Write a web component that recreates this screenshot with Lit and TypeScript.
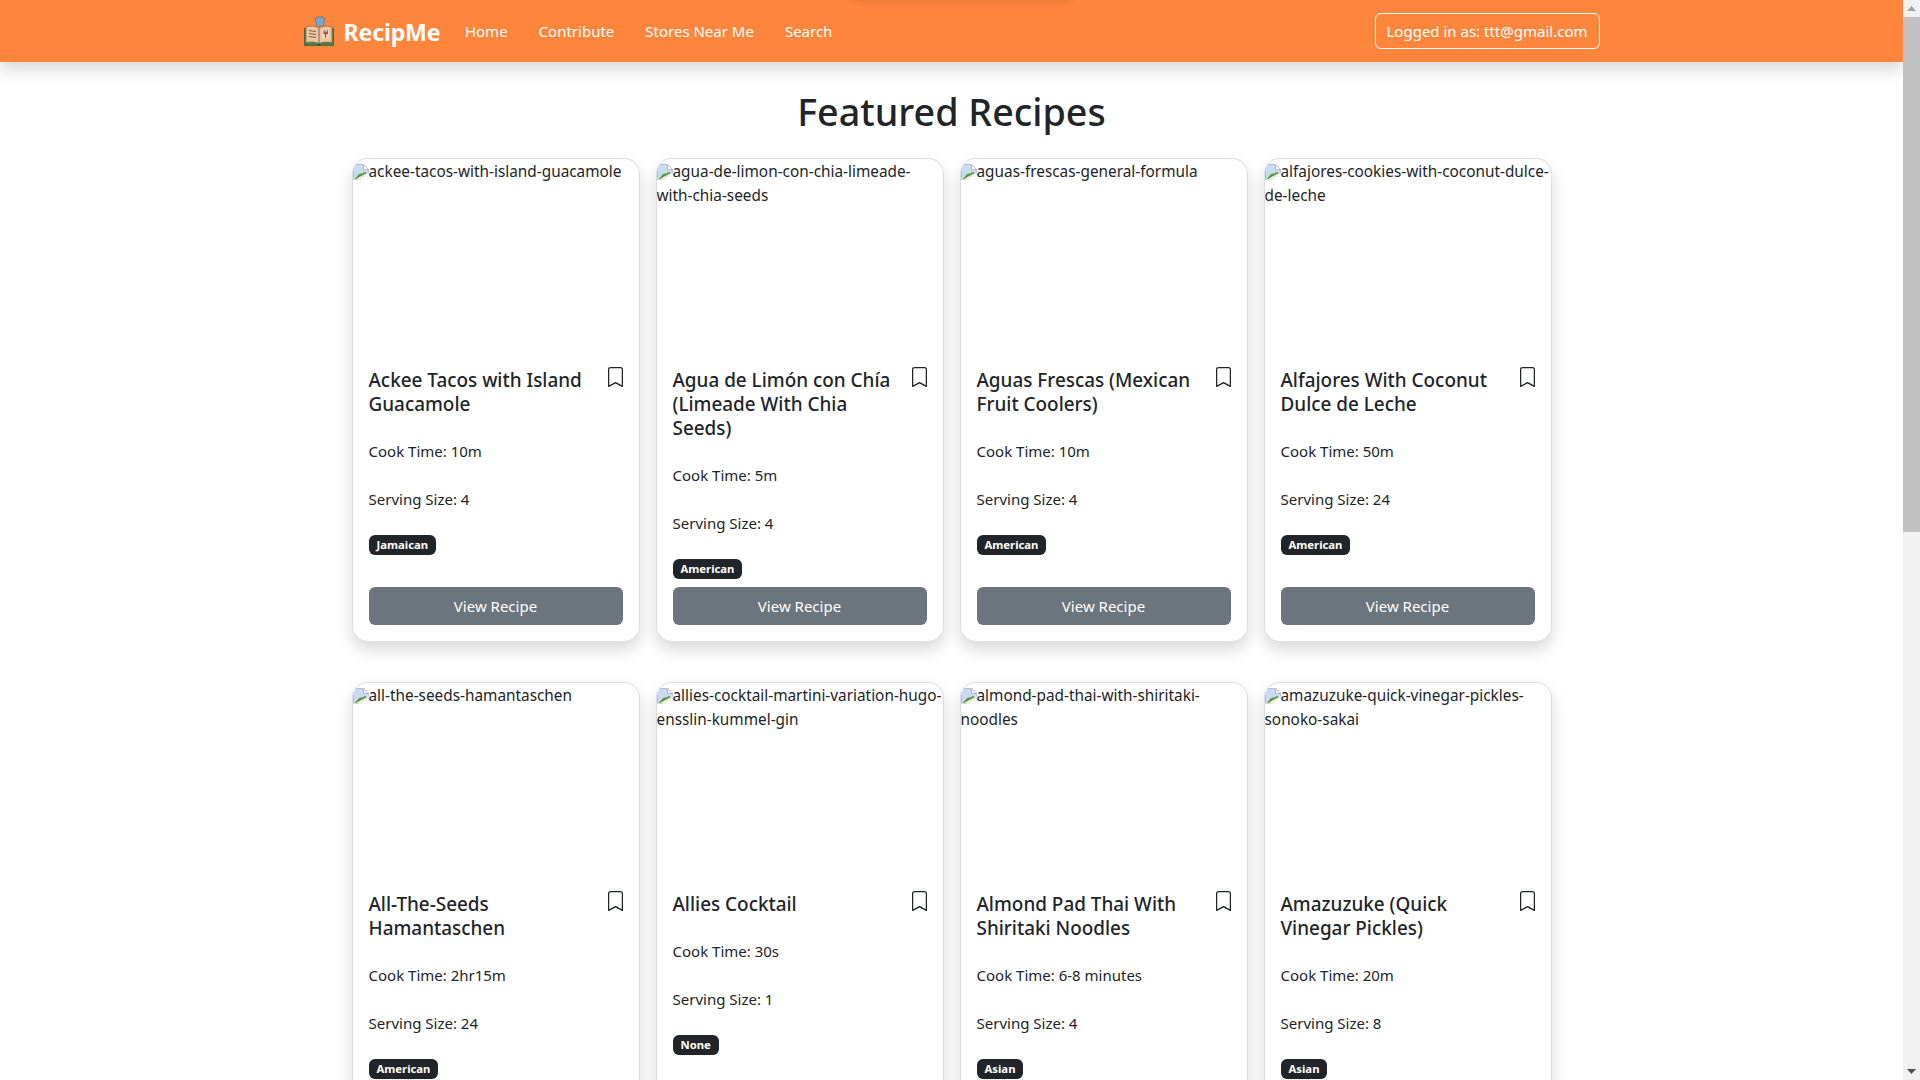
import { LitElement, html, css, svg } from "lit";
import { customElement } from "lit/decorators.js";

interface Recipe { title: string; cook: string; size: string; tag: string; alt: string; }

const RECIPES: Recipe[] = [
  { title: "Ackee Tacos with Island Guacamole", cook: "10m", size: "4", tag: "Jamaican", alt: "ackee-tacos-with-island-guacamole" },
  { title: "Agua de Limón con Chía (Limeade With Chia Seeds)", cook: "5m", size: "4", tag: "American", alt: "agua-de-limon-con-chia-limeade-with-chia-seeds" },
  { title: "Aguas Frescas (Mexican Fruit Coolers)", cook: "10m", size: "4", tag: "American", alt: "aguas-frescas-general-formula" },
  { title: "Alfajores With Coconut Dulce de Leche", cook: "50m", size: "24", tag: "American", alt: "alfajores-cookies-with-coconut-dulce-de-leche" },
  { title: "All-The-Seeds Hamantaschen", cook: "2hr15m", size: "24", tag: "American", alt: "all-the-seeds-hamantaschen" },
  { title: "Allies Cocktail", cook: "30s", size: "1", tag: "None", alt: "allies-cocktail-martini-variation-hugo-ensslin-kummel-gin" },
  { title: "Almond Pad Thai With Shiritaki Noodles", cook: "6-8 minutes", size: "4", tag: "Asian", alt: "almond-pad-thai-with-shiritaki-noodles" },
  { title: "Amazuzuke (Quick Vinegar Pickles)", cook: "20m", size: "8", tag: "Asian", alt: "amazuzuke-quick-vinegar-pickles-sonoko-sakai" },
];

const logo = svg`<svg class="logo" viewBox="0 0 30 30" width="30" height="30" aria-hidden="true">
  <path d="M10.800 1.800l2 .6L13.400 0.400h1.200l.6 1.500h1.400l.6-1.500h1.200l.6 2 2-.6-1.300 5V10h-7.400V6.800z" fill="#7ba7cf" stroke="#4d6f8c" stroke-width=".6"/>
  <rect x="0.300" y="12.500" width="29.400" height="17" fill="#3f8044" stroke="#2d5e34" stroke-width=".6"/>
  <path d="M2 11c4.500-1.500 9.500-1 13 .9 3.500-1.900 8.500-2.400 13-.9v15.500c-5-1-10-.5-13 1-3-1.500-8-2-13-1z" fill="#eec5a4" stroke="#9d6650" stroke-width=".8"/>
  <path d="M15 12v15" stroke="#8f5a48" stroke-width="1"/>
  <path d="M5 14.500l7 1M5 17.500l7 1M5 20.500l7 1" stroke="#7d5f52" stroke-width="1"/>
  <path d="M18 14h7v8h-7z" fill="#f4d8c0"/>
  <path d="M19.500 14.500v3.500h1.500v3.500h1.200V18H24v-3.500h-1v2h-1v-2h-.7v2h-.8v-2z" fill="#a83a3a"/>
  <rect x="13.500" y="27.500" width="3" height="2.500" fill="#2d5e34"/>
</svg>`;

const broken = svg`<svg class="broken" viewBox="0 0 16 16" width="16" height="16" aria-hidden="true">
  <path d="M.5.500h10l5 5v3L.5 15.500z" fill="#c9daf5"/>
  <path d="M10.500.500v5h5z" fill="#fff"/>
  <path d="M2 14.800l4-4.800 3.500-.8 3-1.500 1 1.500L2.500 15.500z" fill="#5c9e31"/>
  <path d="M.5 15.500V.5h10l5 5v3.500M10.500.5v5h5" fill="none" stroke="#b8bcc2"/>
  <path d="M.5 15.500h6M15.500 9L7 15.500" fill="none" stroke="#d5d8db"/>
</svg>`;

const bookmark = svg`<svg class="mark" viewBox="2 0 12 16" width="15" height="20" fill="currentColor" aria-hidden="true">
  <path d="M2 2a2 2 0 0 1 2-2h8a2 2 0 0 1 2 2v13.500a.5.500 0 0 1-.777.416L8 13.101l-5.223 2.815A.5.500 0 0 1 2 15.500V2zm2-1a1 1 0 0 0-1 1v12.566l4.723-2.482a.5.500 0 0 1 .554 0L13 14.566V2a1 1 0 0 0-1-1H4z"/>
</svg>`;

@customElement("app-root")
export class AppRoot extends LitElement {
  static styles = css`
    :host {
      display: block;
      height: 100vh;
      overflow: hidden;
      font-family: "Noto Sans", "Open Sans", sans-serif;
      font-size: 15px;
      line-height: 24px;
      color: #212529;
      background: #fff;
    }
    .page { display: flex; height: 100%; }
    .main { flex: 1; min-width: 0; height: 100%; overflow: hidden; }

    .nav {
      position: relative;
      height: 62px;
      background: #fd853c;
      box-shadow: 0 8px 16px rgba(0, 0, 0, 0.15);
      overflow: visible;
      color: #fff;
    }
    .nav-clip { position: absolute; left: 0; right: 0; top: 0; height: 6px; overflow: hidden; }
    .nav-peek {
      position: absolute;
      left: 853px;
      width: 218px;
      top: -12px;
      height: 12px;
      box-shadow: 0 0 10px rgba(0, 0, 0, 0.12);
    }
    .nav-inner {
      position: relative;
      width: 1296px;
      height: 100%;
      margin: 0 auto;
      display: flex;
      align-items: center;
    }
    .brand {
      display: flex;
      align-items: center;
      gap: 10px;
      font-size: 23.200px;
      font-weight: 700;
      margin-right: 9px;
      letter-spacing: -0.2px;
    }
    .brand span { padding-top: 2px; }
    .logo { display: block; flex: none; }
    .links { display: flex; flex: 1; }
    .links a { padding: 0 15.500px; color: #fff; text-decoration: none; }
    .user {
      height: 36px;
      box-sizing: border-box;
      padding: 0 11px;
      display: flex;
      align-items: center;
      border: 1px solid #fff;
      border-radius: 6px;
    }

    h1 {
      margin: 26px 0 22px;
      font-size: 37.700px;
      line-height: 48px;
      font-weight: 500;
      text-align: center;
    }
    .grid {
      width: 1200px;
      margin: 0 auto;
      display: grid;
      grid-template-columns: repeat(4, 288px);
      column-gap: 16px;
      row-gap: 40.400px;
    }
    .card {
      display: flex;
      flex-direction: column;
      box-sizing: border-box;
      border: 1px solid rgba(0, 0, 0, 0.125);
      border-radius: 16px;
      background: #fff;
      box-shadow: 0 8px 16px rgba(0, 0, 0, 0.15);
      overflow: hidden;
    }
    .img { height: 192px; flex: none; font-size: 15.350px; overflow-wrap: break-word; }
    .broken { display: inline-block; vertical-align: -3px; }
    .body { flex: 1; display: flex; flex-direction: column; padding: 16px; }
    .head { display: flex; align-items: flex-start; gap: 20px; margin-bottom: 23px; }
    .title { flex: 1; min-width: 0; margin: 0; padding-top: 1px; font-size: 18.900px; line-height: 24px; font-weight: 500; }
    .mark { display: block; flex: none; margin-top: 0; }
    .body p { margin: 0 0 24px; }
    .badge {
      align-self: flex-start;
      margin-bottom: 8px;
      height: 20px;
      display: flex;
      align-items: center;
      padding: 0 8px;
      border-radius: 6px;
      background: #212529;
      color: #fff;
      font-size: 11.300px;
      font-weight: 700;
      line-height: 20px;
    }
    .view {
      margin-top: auto;
      height: 38px;
      display: flex;
      align-items: center;
      justify-content: center;
      border-radius: 6px;
      background: #6c757d;
      color: #fff;
    }

    .scrollbar {
      flex: none;
      width: 17px;
      height: 100%;
      background: #f1f1f1;
      display: flex;
      flex-direction: column;
    }
    .arrow { height: 17px; flex: none; display: flex; align-items: center; justify-content: center; }
    .track { flex: 1; min-height: 0; }
    .thumb { height: 515px; background: #c1c1c1; }
  `;

  render() {
    return html`
      <div class="page">
        <div class="main">
          <nav class="nav">
            <div class="nav-clip"><div class="nav-peek"></div></div>
            <div class="nav-inner">
              <div class="brand">${logo}<span>RecipMe</span></div>
              <div class="links">
                <a>Home</a><a>Contribute</a><a>Stores Near Me</a><a>Search</a>
              </div>
              <div class="user">Logged in as: ttt@gmail.com</div>
            </div>
          </nav>
          <h1>Featured Recipes</h1>
          <div class="grid">
            ${RECIPES.map(
              (r) => html`
                <article class="card">
                  <div class="img">${broken}${r.alt}</div>
                  <div class="body">
                    <div class="head">
                      <h5 class="title">${r.title}</h5>
                      ${bookmark}
                    </div>
                    <p>Cook Time: ${r.cook}</p>
                    <p>Serving Size: ${r.size}</p>
                    <span class="badge">${r.tag}</span>
                    <div class="view">View Recipe</div>
                  </div>
                </article>
              `
            )}
          </div>
        </div>
        <div class="scrollbar">
          <div class="arrow"><svg width="9" height="5" viewBox="0 0 9 5"><path d="M4.500 0L9 5H0z" fill="#a3a3a3"/></svg></div>
          <div class="track"><div class="thumb"></div></div>
          <div class="arrow"><svg width="9" height="5" viewBox="0 0 9 5"><path d="M0 0h9L4.500 5z" fill="#505050"/></svg></div>
        </div>
      </div>
    `;
  }
}
